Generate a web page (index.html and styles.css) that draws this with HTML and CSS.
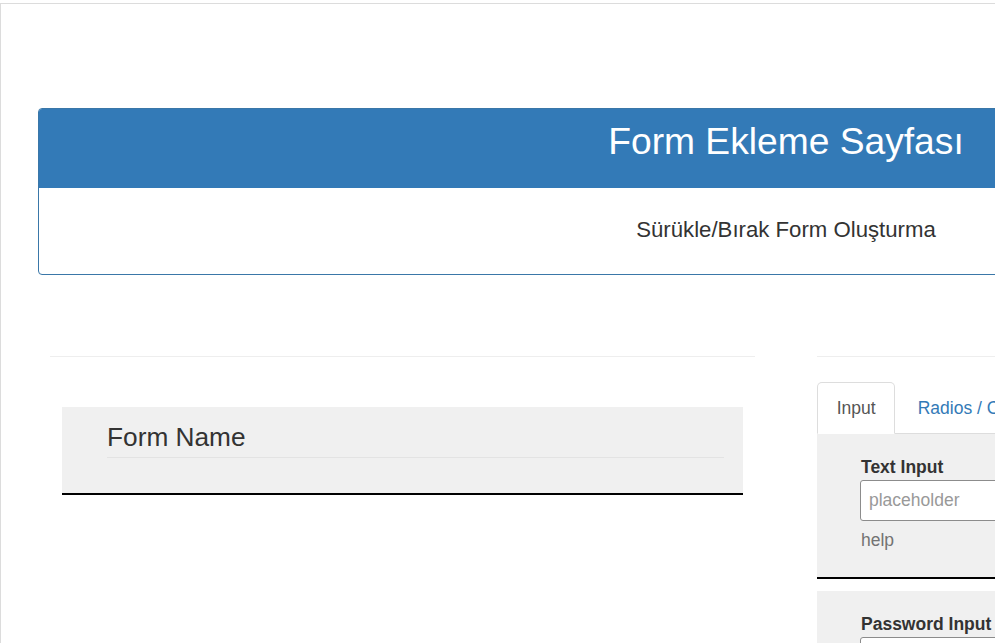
FILE: index.html
```html
<!DOCTYPE html>
<html lang="tr">
<head>
<meta charset="utf-8">
<title>Form Ekleme Sayfası</title>
<link rel="stylesheet" href="styles.css">
</head>
<body>
<div class="frame">
  <div class="panel">
    <div class="panel-heading">Form Ekleme Sayfası</div>
    <div class="panel-body">Sürükle/Bırak Form Oluşturma</div>
  </div>
  <div class="row">
    <div class="col-left">
      <div class="form-box">
        <div class="legend">Form Name</div>
      </div>
    </div>
    <div class="col-right">
      <ul class="tabs">
        <li class="tab active">Input</li>
        <li class="tab link">Radios / Checkboxes</li>
        <li class="tab link">Select</li>
      </ul>
      <div class="comp-box">
        <div class="label">Text Input</div>
        <div class="input placeholder">placeholder</div>
        <div class="help">help</div>
      </div>
      <div class="comp-box second">
        <div class="label">Password Input</div>
        <div class="input"></div>
      </div>
    </div>
  </div>
</div>
</body>
</html>
```
FILE: styles.css
```css
html, body {
  margin: 0;
  padding: 0;
  overflow: hidden;
  background: #fff;
}
body {
  font-family: "Liberation Sans", Arial, sans-serif;
  font-size: 17.5px;
  line-height: 25px;
  color: #333;
}
.frame {
  margin-top: 3px;
  border-top: 1px solid #dcdcdc;
  border-left: 1px solid #dcdcdc;
  height: 700px;
  width: 1600px;
}
.panel {
  margin: 104px 0 0 37px;
  width: 1496px;
  border: 1px solid #3a77a8;
  border-radius: 4px;
  box-sizing: border-box;
  overflow: hidden;
}
.panel-heading {
  background: #337ab7;
  color: #fff;
  height: 79px;
  box-sizing: border-box;
  padding-top: 11px;
  font-size: 37.2px;
  line-height: 43px;
  text-align: center;
}
.panel-body {
  height: 86px;
  box-sizing: border-box;
  padding-top: 29px;
  font-size: 22.2px;
  line-height: 26px;
  text-align: center;
}
.row {
  display: flex;
  margin-top: 81px;
  margin-left: 49px;
  gap: 62px;
}
.col-left {
  width: 705px;
  border-top: 1px solid #eee;
  flex: none;
}
.col-right {
  width: 700px;
  border-top: 1px solid #eee;
  flex: none;
}
.form-box {
  margin: 50px 12px 0;
  background: #f0f0f0;
  padding: 15px 19px 35px 45px;
  border-bottom: 2px solid #000;
}
.legend {
  font-size: 26.25px;
  line-height: 30px;
  padding-bottom: 5px;
  border-bottom: 1px solid #e3e3e3;
}
.tabs {
  list-style: none;
  margin: 25px 0 0;
  padding: 0;
  display: flex;
  border-bottom: 1px solid #ddd;
}
.tab {
  padding: 12.5px 18.75px;
  border: 1px solid transparent;
  border-radius: 5px 5px 0 0;
  margin-right: 2.5px;
  margin-bottom: -1px;
  white-space: nowrap;
}
.tab.active {
  background: #fff;
  border-color: #ddd;
  border-bottom-color: transparent;
  color: #555;
}
.tab.link {
  color: #337ab7;
}
.comp-box {
  background: #f0f0f0;
  padding: 21px 0 26px 44px;
  border-bottom: 2px solid #000;
}
.comp-box.help-box {
  padding-bottom: 24px;
}
.comp-box.second {
  margin-top: 12px;
}
.label {
  font-weight: bold;
  color: #333;
}
.input {
  width: 420px;
  height: 41px;
  box-sizing: border-box;
  border: 1px solid #8c8c8c;
  border-radius: 3px;
  background: #fff;
  padding: 7px 8px;
  line-height: 25px;
  margin-left: -1px;
}
.placeholder {
  color: #999;
}
.help {
  margin-top: 7px;
  margin-bottom: -2px;
  color: #737373;
}
```
